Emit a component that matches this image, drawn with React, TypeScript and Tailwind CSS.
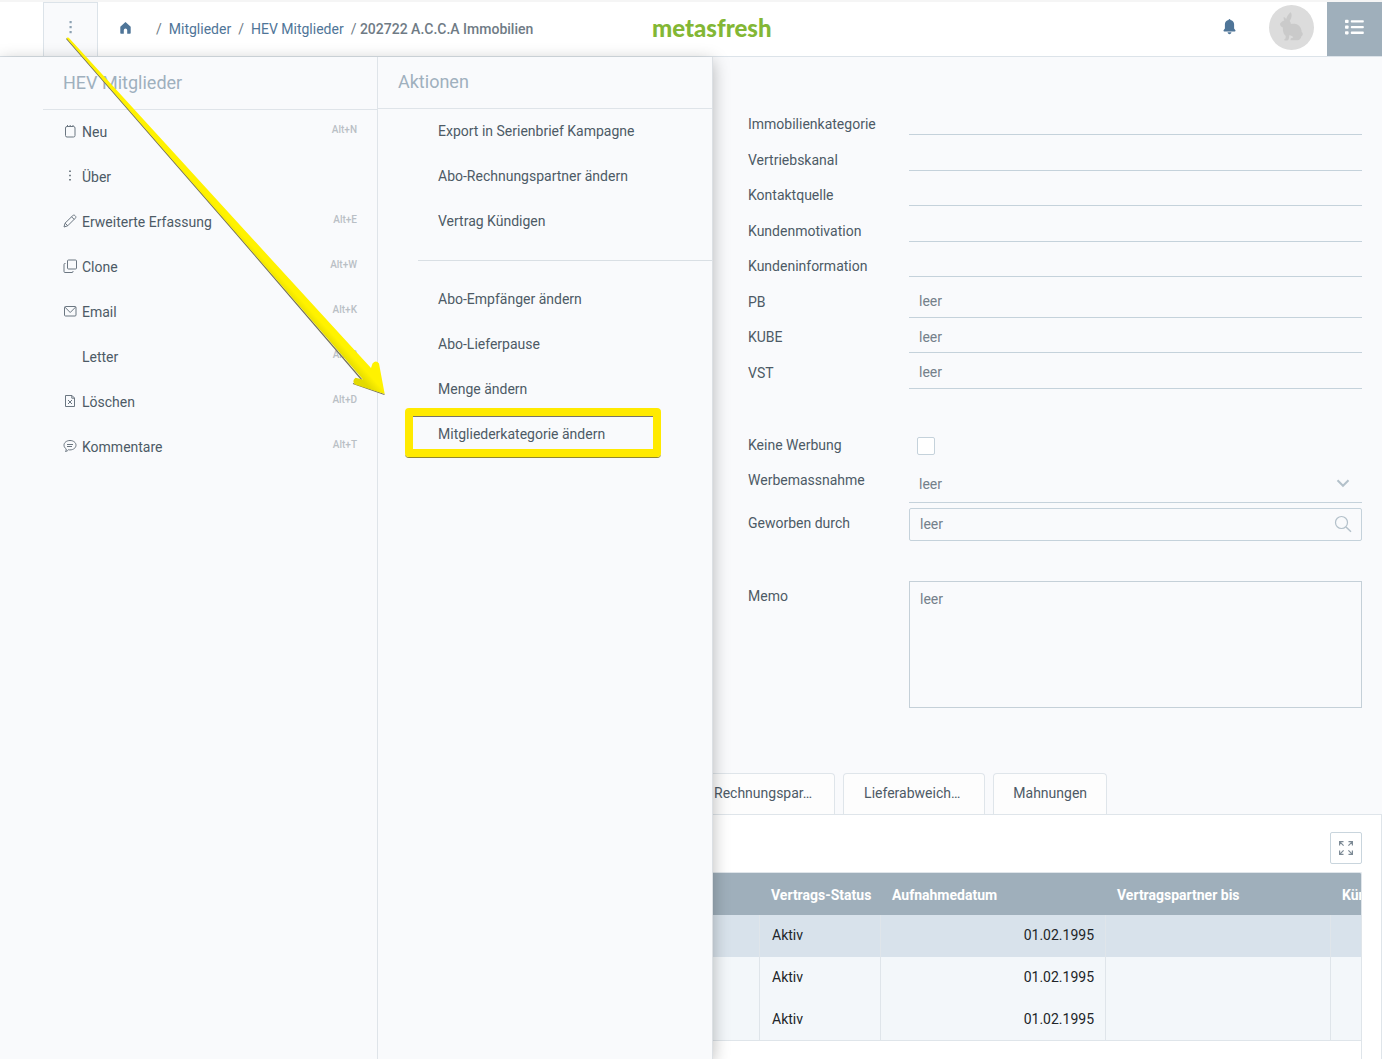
import React from "react";

type MenuEntry = {
  label: string;
  shortcut?: string;
  icon?: React.ReactNode;
};

const iconProps = {
  width: 14,
  height: 14,
  viewBox: "0 0 14 14",
  fill: "none",
  stroke: "#6b7681",
  strokeWidth: 1,
  "aria-hidden": true,
};

const menuEntries: MenuEntry[] = [
  {
    label: "Neu",
    shortcut: "Alt+N",
    icon: (
      <svg {...iconProps}>
        <rect x="2.5" y="2.5" width="9.500" height="10.500" rx="1.500" />
        <path d="M4.5 1v1.5M7.200 1v1.5M10 1v1.5" />
      </svg>
    ),
  },
  {
    label: "Über",
    icon: (
      <svg {...iconProps} fill="#5a6670" stroke="none">
        <path d="M6.200 1.500h1.600v1.600H6.200zM6.200 5.700h1.600v1.600H6.200zM6.200 9.900h1.600v1.600H6.200z" />
      </svg>
    ),
  },
  {
    label: "Erweiterte Erfassung",
    shortcut: "Alt+E",
    icon: (
      <svg {...iconProps}>
        <path d="M1 13l1-3.800 7.800-7.600c.6-.6 1.600-.6 2.200 0l.4.4c.6.6.6 1.500 0 2.100l-7.700 7.700zM2.200 9.200l2.600 2.600M8.600 2.800l2.600 2.600" />
      </svg>
    ),
  },
  {
    label: "Clone",
    shortcut: "Alt+W",
    icon: (
      <svg {...iconProps}>
        <rect x="4.500" y="1" width="9" height="9" rx="1" />
        <path d="M2.500 4.500h-.500a1 1 0 0 0-1 1v7a1 1 0 0 0 1 1h7a1 1 0 0 0 1-1v-.5" />
      </svg>
    ),
  },
  {
    label: "Email",
    shortcut: "Alt+K",
    icon: (
      <svg {...iconProps}>
        <rect x="1.500" y="2.500" width="11.500" height="9.500" rx="1" />
        <path d="M1.800 3l5.400 5.500L12.700 3" />
      </svg>
    ),
  },
  { label: "Letter", shortcut: "Alt+R" },
  {
    label: "Löschen",
    shortcut: "Alt+D",
    icon: (
      <svg {...iconProps}>
        <path d="M2.500 1.500h6.500l2.500 2.500v8.500h-9zM8.800 1.500v2.700h2.700M5 6l4 4M9 6l-4 4" />
      </svg>
    ),
  },
  {
    label: "Kommentare",
    shortcut: "Alt+T",
    icon: (
      <svg {...iconProps}>
        <path d="M7 1.500c3.300 0 6 2 6 4.700s-2.700 4.700-6 4.700c-.6 0-1 0-1.500-.2-.6.900-1.700 1.700-3 1.800.6-.8.800-1.700.7-2.600C1.800 9 1 7.700 1 6.200c0-2.700 2.700-4.700 6-4.700zM4 5.500h6M4 7.500h5" />
      </svg>
    ),
  },
];

const actionsTop = ["Export in Serienbrief Kampagne", "Abo-Rechnungspartner ändern", "Vertrag Kündigen"];
const actionsBottom = ["Abo-Empfänger ändern", "Abo-Lieferpause", "Menge ändern", "Mitgliederkategorie ändern"];

const fields = [
  { id: "immobilienkategorie", label: "Immobilienkategorie" },
  { id: "vertriebskanal", label: "Vertriebskanal" },
  { id: "kontaktquelle", label: "Kontaktquelle" },
  { id: "kundenmotivation", label: "Kundenmotivation" },
  { id: "kundeninformation", label: "Kundeninformation" },
  { id: "pb", label: "PB", placeholder: "leer" },
  { id: "kube", label: "KUBE", placeholder: "leer" },
  { id: "vst", label: "VST", placeholder: "leer" },
];

const rows = [
  { status: "Aktiv", date: "01.02.1995" },
  { status: "Aktiv", date: "01.02.1995" },
  { status: "Aktiv", date: "01.02.1995" },
];

function Header() {
  return (
    <header className="flex h-[57px] shrink-0 border-t-2 border-b border-t-[#f5f5f5] border-b-[#dce3e9] bg-white">
      <div className="flex w-[652px] items-stretch pl-[43px]">
        <button aria-label="Menü" className="flex w-[55px] justify-center border border-b-0 border-[#dce3e9] bg-[#f9fafc] pt-[17px]">
          <svg width="4" height="16" viewBox="0 0 4 16" fill="#8ea2b3" aria-hidden="true">
            <rect x="0.500" y="1" width="2.200" height="2.200" />
            <rect x="0.500" y="6" width="2.200" height="2.200" />
            <rect x="0.500" y="11" width="2.200" height="2.200" />
          </svg>
        </button>
        <nav className="flex items-center whitespace-pre text-[#4f7598]">
          <a href="#home" aria-label="Home" className="mr-[25px] ml-[22px] pb-0.5">
            <svg width="11" height="12" viewBox="0 0 11 12" fill="currentColor" aria-hidden="true">
              <path d="M5.500 0L10.700 4.700V11a.7.7 0 0 1-.7.7H7.200V8.200a1.700 1.700 0 0 0-3.400 0v3.500H1A.7.700 0 0 1 .3 11V4.700z" />
            </svg>
          </a>
          <span className="text-[#6f7b85]">/</span>
          <a href="#mitglieder" className="mx-[7px]">Mitglieder</a>
          <span className="text-[#6f7b85]">/</span>
          <a href="#hev" className="mx-[7px]">HEV Mitglieder</a>
          <span className="font-medium text-[#6f7b85]"><span className="font-normal">/ </span>202722 A.C.C.A Immobilien</span>
        </nav>
      </div>
      <div className="font-['Lato',sans-serif] text-2xl leading-[52px] font-black text-[#83b735]">metasfresh</div>
      <div className="ml-auto flex items-stretch">
        <button aria-label="Benachrichtigungen" className="mr-[33px] pb-1">
          <svg width="13" height="16" viewBox="0 0 13 16" fill="#4f7598" aria-hidden="true">
            <path d="M6.500 0c.6 0 .9.400.9.900 2.300.5 3.700 2.200 3.700 4.300v4.300l1.300 1.700c.3.500 0 1.200-.5 1.200H1.100c-.5 0-.8-.7-.5-1.200l1.300-1.700V5.200c0-2.100 1.400-3.800 3.700-4.300 0-.5.300-.9.900-.9zM4.600 13.300h3.800c0 1.100-.8 1.900-1.900 1.900s-1.900-.8-1.900-1.900z" />
          </svg>
        </button>
        <div className="mt-[3px] mr-[13px] flex size-[45px] items-center justify-center rounded-full bg-[#dcdcdc] pb-0.5">
          <svg width="23" height="29" viewBox="0 0 23 29" fill="#cacaca" aria-hidden="true">
            <path d="M10.400.3c1.400 1.200 1.500 3.200.9 5.200-.4 1.500-1 2.500-1.700 3.400 1 .9 1.400 2 1.100 3.200 1.600-.5 3.600-.5 5.300 0 3.500 1.100 5.600 4.300 5.700 7.900.8.500 1.100 1.300 1 2.300-.1 1-.6 1.700-1.300 2-.3 2.300-1.800 4-4 4h-6.600c-.6-.9-.1-2 1-2.300l1.500-.4c-.6-1.600-2-2.300-4.100-2.400.2 2.500-.7 5.300-2.300 5.300H4.500c-.5-.8.1-1.600 1-1.900l.2-2.700c-1.800-1.600-3.200-4.300-2.800-8.300C1.400 15.300-.1 13.600 0 11.700c1.100-1.600 2.400-2.800 4.300-3.300-.7-1.100-.8-2.300-.5-3.500 1 .4 1.800 1.100 2.400 2C7 4.400 8.500 2 10.400.3z" />
          </svg>
        </div>
        <button aria-label="Seitenliste" className="flex w-[55px] justify-center bg-[#9fafbb] pt-[17px]">
          <svg width="19" height="16" viewBox="0 0 19 16" fill="#ffffff" aria-hidden="true">
            <rect x="0" y="0.800" width="3.600" height="3.200" rx="0.800" />
            <rect x="5.800" y="1.200" width="13" height="2.400" rx="0.800" />
            <rect x="0" y="6.500" width="3.600" height="3.200" rx="0.800" />
            <rect x="5.800" y="6.900" width="13" height="2.400" rx="0.800" />
            <rect x="0" y="12.200" width="3.600" height="3.200" rx="0.800" />
            <rect x="5.800" y="12.600" width="13" height="2.400" rx="0.800" />
          </svg>
        </button>
      </div>
    </header>
  );
}

function ActionItem({ label, marked }: { label: string; marked?: boolean }) {
  return (
    <li className="relative">
      <button className="block h-[45px] w-full pb-0.5 pl-[60px] text-left">{label}</button>
      {marked && (
        <span className="pointer-events-none absolute -top-1 left-[27px] h-[49px] w-64 rounded-sm border-8 border-[#ffea00] shadow-[0_1px_0_#8f8630,inset_0_1px_0_#77746a]"></span>
      )}
    </li>
  );
}

function Subheader() {
  return (
    <aside className="relative z-10 flex w-[713px] shrink-0 border-r border-[#dce0e4] bg-[#f9fafc] text-[#4d5a66] shadow-[0_4px_16px_rgba(0,0,0,0.28)]">
      <section className="w-[378px] border-r border-[#dfe4e9] pl-[43px]">
        <h2 className="h-[53px] border-b border-[#dfe4e9] pl-5 text-lg leading-[52px] text-[#9fb0be]">HEV Mitglieder</h2>
        <ul>
          {menuEntries.map((entry) => (
            <li key={entry.label}>
              <button className="flex h-[45px] w-full items-center pr-5 pb-0.5 pl-5 text-left">
                <span className="mr-[5px] h-[16px] w-[14px]">{entry.icon}</span>
                <span className="flex-1">{entry.label}</span>
                <span className="pb-0.5 text-[10px] font-medium text-[#b9bfc5]">{entry.shortcut}</span>
              </button>
            </li>
          ))}
        </ul>
      </section>
      <section className="flex-1">
        <h2 className="h-[52px] border-b border-[#dfe4e9] pl-5 text-lg leading-[50px] text-[#9fb0be]">Aktionen</h2>
        <ul>
          {actionsTop.map((label) => (
            <ActionItem key={label} label={label} />
          ))}
        </ul>
        <hr className="my-4 ml-10 border-[#d9dfe4]" />
        <ul>
          {actionsBottom.map((label) => (
            <ActionItem key={label} label={label} marked={label === "Mitgliederkategorie ändern"} />
          ))}
        </ul>
      </section>
    </aside>
  );
}

function Form() {
  return (
    <form className="pt-[49px] pr-5 pl-[35px] text-[#4d5a66]">
      <div className="grid h-[284px] auto-rows-fr">
        {fields.map((field) => (
          <div key={field.id} className="flex items-start">
            <label htmlFor={field.id} className="w-[161px] leading-9">{field.label}</label>
            <input
              id={field.id}
              placeholder={field.placeholder}
              className={
                field.placeholder
                  ? "h-[34px] min-w-0 flex-1 border-b border-[#c5d2db] px-[10px] pt-0.5 outline-none placeholder:text-[#74808a]"
                  : "h-[29px] min-w-0 flex-1 border-b border-[#c5d2db] px-[10px] outline-none"
              }
            />
          </div>
        ))}
      </div>
      <div className="mt-[37px] flex h-9 items-center">
        <label htmlFor="werbung" className="w-[161px]">Keine Werbung</label>
        <input id="werbung" type="checkbox" className="mt-0.5 ml-2 size-[18px] appearance-none rounded-xs border border-[#c5d2db] bg-white" />
      </div>
      <div className="flex items-start">
        <label htmlFor="massnahme" className="w-[161px] leading-[34px]">Werbemassnahme</label>
        <div className="relative min-w-0 flex-1">
          <select id="massnahme" className="h-10 w-full appearance-none border-b border-[#c5d2db] px-[10px] pt-0.5 text-[#74808a]">
            <option>leer</option>
          </select>
          <svg className="pointer-events-none absolute top-4 right-3" width="14" height="9" viewBox="0 0 14 9" fill="none" stroke="#b3c0ca" strokeWidth="2" aria-hidden="true">
            <path d="M1.500 1.200L7 6.800l5.500-5.600" />
          </svg>
        </div>
      </div>
      <div className="mt-[5px] flex items-start">
        <label htmlFor="geworben" className="w-[161px] leading-[30px]">Geworben durch</label>
        <div className="flex h-[33px] min-w-0 flex-1 items-center rounded-xs border border-[#c5d2db] pr-[9px] pb-0.5 pl-[10px]">
          <input id="geworben" placeholder="leer" className="min-w-0 flex-1 outline-none placeholder:text-[#74808a]" />
          <svg width="18" height="18" viewBox="0 0 18 18" fill="none" stroke="#b3c0ca" aria-hidden="true">
            <circle cx="7.500" cy="7.500" r="6" strokeWidth="1.200" />
            <path d="M12 12l5 4.800" strokeWidth="1.500" />
          </svg>
        </div>
      </div>
      <div className="mt-10 flex items-start">
        <label htmlFor="memo" className="w-[161px] leading-[30px]">Memo</label>
        <textarea id="memo" placeholder="leer" className="h-[127px] min-w-0 flex-1 resize-none border border-[#c5d0d8] px-[10px] py-[7px] outline-none placeholder:text-[#74808a]" />
      </div>
    </form>
  );
}

function Tabs() {
  return (
    <div className="mt-[65px] flex flex-1 flex-col">
      <div role="tablist" className="flex h-[41px] gap-2 text-[#4d5a66]">
        <button role="tab" className="rounded-tr-sm border-t border-r border-[#dfe5ea] bg-[#fdfdfd] pr-[22px] pb-0.5 pl-px">Rechnungspar…</button>
        <button role="tab" className="rounded-t-sm border border-b-0 border-[#dfe5ea] bg-[#fdfdfd] pr-6 pb-0.5 pl-5">Lieferabweich…</button>
        <button role="tab" className="rounded-t-sm border border-b-0 border-[#dfe5ea] bg-[#fdfdfd] px-[19px] pb-0.5">Mahnungen</button>
      </div>
      <div className="flex flex-1 flex-col border-t border-r border-[#dfe5ea] bg-white pt-[17px] pr-[19px]">
        <button aria-label="Vollbild" className="flex size-8 items-center justify-center self-end rounded-xs border border-[#c9d5dd]">
          <svg width="14" height="14" viewBox="0 0 14 14" fill="none" stroke="#7d8a95" strokeWidth="1.200" aria-hidden="true">
            <path d="M.6 4.500V.6h3.900M.6.600l4 4M9.500.6h3.900v3.900M13.400.6l-4 4M.6 9.500v3.900h3.900M.6 13.400l4-4M13.400 9.500v3.900H9.500M13.400 13.400l-4-4" />
          </svg>
        </button>
        <div className="mt-2 flex-1 overflow-hidden rounded-tr-xs border-t border-r border-[#dfe5ea]">
          <table className="w-[843px] table-fixed border-separate border-spacing-0 text-[#212529]">
            <colgroup>
              <col className="w-[47px]" />
              <col className="w-[121px]" />
              <col className="w-[225px]" />
              <col className="w-[225px]" />
              <col className="w-[225px]" />
            </colgroup>
            <thead>
              <tr className="h-[42px] bg-[#9fafbb] text-left text-white">
                <th></th>
                <th className="pt-0.5 pl-[11px] font-bold whitespace-nowrap">Vertrags-Status</th>
                <th className="pt-0.5 pl-[11px] font-bold">Aufnahmedatum</th>
                <th className="pt-0.5 pl-[11px] font-bold">Vertragspartner bis</th>
                <th className="pt-0.5 pl-[11px] font-bold">Kündigungsdatum</th>
              </tr>
            </thead>
            <tbody className="[&>tr:last-child>td]:border-b">
              {rows.map((row, i) => (
                <tr key={i} className={i === 0 ? "h-[42px] bg-[#d8e2eb]" : "h-[42px] bg-[#f3f7fa]"}>
                  <td className="border-r border-[#dfe5ea]"></td>
                  <td className="border-r border-[#dfe5ea] pb-0.5 pl-3">{row.status}</td>
                  <td className="border-r border-[#dfe5ea] pr-[11px] pb-0.5 text-right">{row.date}</td>
                  <td className="border-r border-[#dfe5ea]"></td>
                  <td className="border-[#dfe5ea]"></td>
                </tr>
              ))}
            </tbody>
          </table>
        </div>
      </div>
    </div>
  );
}

// arrow from the menu button to the highlighted action
function Pointer() {
  return (
    <svg className="pointer-events-none absolute top-0 left-0 z-20" width="400" height="410" viewBox="0 0 400 410" aria-hidden="true">
      <defs>
        <linearGradient id="pointer" gradientUnits="userSpaceOnUse" x1="233" y1="238" x2="244" y2="228">
          <stop offset="0" stopColor="#e3da00" />
          <stop offset="0.600" stopColor="#fff200" />
          <stop offset="1" stopColor="#fff200" />
        </linearGradient>
      </defs>
      <path d="M66.500 38.500L234 231L362 380M353 383.500L384.500 394.500" stroke="#77735a" strokeWidth="1.200" fill="none" />
      <path d="M66.500 38.200Q67 36.800 68.800 37.800L244.500 230L371 368L372.500 363.500Q376 359.500 379 363.500L384.700 394L355 384.500Q351.500 381 355.500 377.800L363 379.500L233.500 230Z" fill="url(#pointer)" />
    </svg>
  );
}

export default function App() {
  return (
    <div className="relative flex min-h-screen flex-col bg-[#f9fafc] font-['Roboto',sans-serif] text-sm">
      <Header />
      <div className="flex flex-1 items-stretch">
        <Subheader />
        <main className="flex min-w-0 flex-1 flex-col">
          <Form />
          <Tabs />
        </main>
      </div>
      <Pointer />
    </div>
  );
}
